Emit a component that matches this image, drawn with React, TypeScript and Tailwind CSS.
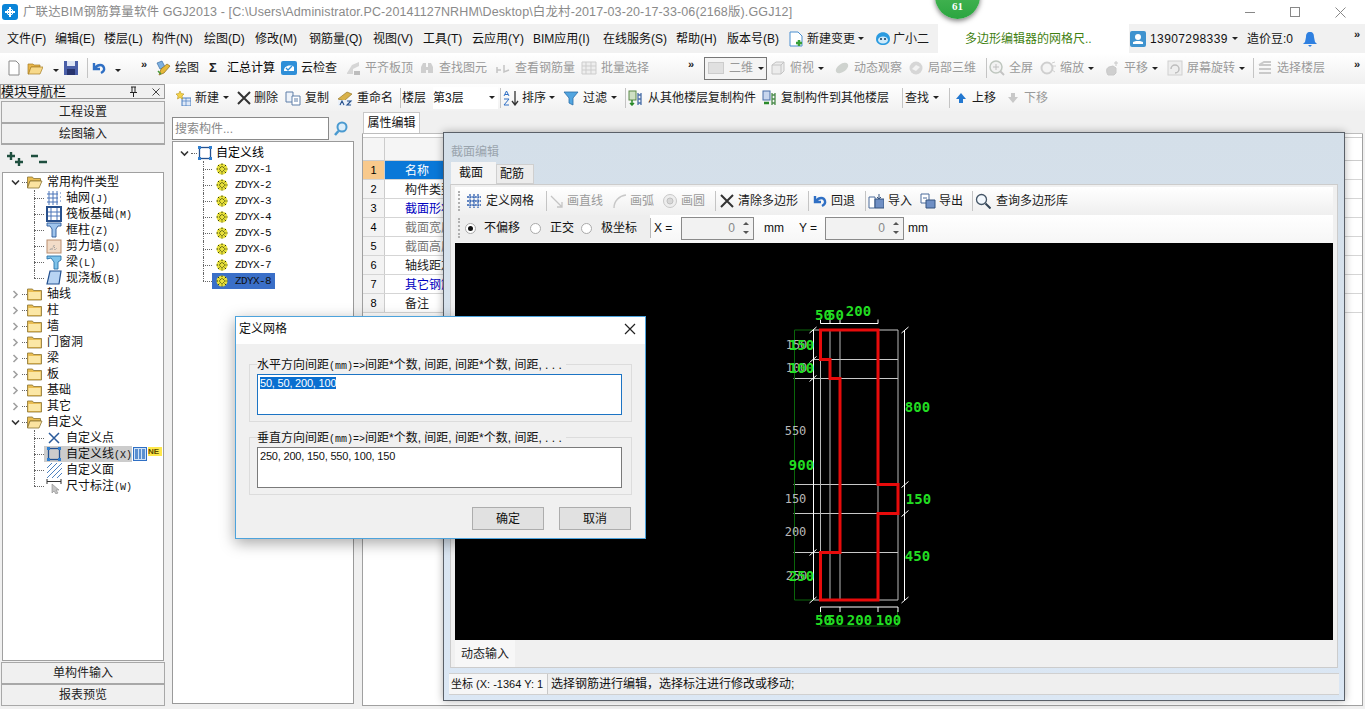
import { ReactNode } from 'react';

const sans = "font-['Liberation_Sans','Noto_Sans_CJK_SC',sans-serif]";
const mono = "font-['Liberation_Mono','Noto_Sans_CJK_SC',monospace]";

const Svg = ({ children, w = 16, h = 16 }: { children: ReactNode; w?: number; h?: number }) => (
  <svg width={w} height={h} viewBox={`0 0 ${w} ${h}`} className="shrink-0">
    {children}
  </svg>
);

const icons: Record<string, ReactNode> = {
  doc: <path d="M3 1h7l3 3v11H3z" fill="#fff" stroke="#8a8a8a" />,
  open: (
    <>
      <path d="M1 4h5l1 1h6v2H4L2 14H1z" fill="#e8b64a" stroke="#a67c24" strokeWidth=".7" />
      <path d="M4 7h12l-3 7H1.500z" fill="#f7d98a" stroke="#a67c24" strokeWidth=".7" />
    </>
  ),
  save: (
    <>
      <rect x="1" y="1" width="14" height="14" fill="#4a5fa8" />
      <rect x="4" y="1" width="8" height="5" fill="#dfe6f5" />
      <rect x="4" y="9" width="8" height="6" fill="#27346e" />
    </>
  ),
  undo: <path d="M3 3v6h6M4 8c3-4 8-4 9 0 .5 2-1 4-3 5" fill="none" stroke="#2f6fc4" strokeWidth="2.400" />,
  draw: (
    <>
      <path d="M2 3l5-2 3 6-5 2z" fill="#7fb1e0" stroke="#3a6ea5" strokeWidth=".7" />
      <path d="M6 9l6-5 3 2-6 7-5 2z" fill="#e7b93a" stroke="#8b6b1a" strokeWidth=".7" />
      <path d="M3 11l3 3" stroke="#4a9a3a" strokeWidth="1.500" />
    </>
  ),
  cloud: (
    <>
      <rect x="0" y="1" width="16" height="14" rx="2" fill="#2f8fd8" />
      <path d="M3 10c0-4 7-6 10-3v4H3z" fill="#fff" />
      <path d="M5 8l2 2 4-4" fill="none" stroke="#2f8fd8" strokeWidth="1.300" />
    </>
  ),
  align: (
    <>
      <path d="M2 13l5-8 7-3v4l-6 3v5H2z" fill="#d6d6d6" />
      <path d="M9 11h6v4H9z" fill="#bdbdbd" />
    </>
  ),
  binoc: <path d="M2 13V7l2-4h3v4h2V3h3l2 4v6H9v-3H7v3z" fill="#cfcfcf" />,
  rebar: <path d="M2 10h4M2 7v6M9 5v7l5-2" fill="none" stroke="#c4c4c4" strokeWidth="1.500" />,
  batch: <path d="M1 2h14v12H1zM1 6h14M1 10h14M5 2v12M10 2v12" fill="#eee" stroke="#cdcdcd" />,
  cube: <path d="M2 5l4-3h8v9l-3 3H2zM2 5h9v9M11 5l3-3" fill="#ececec" stroke="#c4c4c4" />,
  orbit: <ellipse cx="8" cy="8" rx="7" ry="4" fill="#cfd3cf" transform="rotate(-35 8 8)" />,
  part: (
    <>
      <circle cx="8" cy="8" r="6.500" fill="#d6d6d6" />
      <path d="M4 9l4-4 4 2-4 4z" fill="#f2f2f2" />
    </>
  ),
  zoomfull: (
    <>
      <circle cx="7" cy="7" r="6" fill="#f2f2f2" stroke="#bfc7bf" strokeWidth="1.500" />
      <path d="M7 4v6M4 7h6" stroke="#c0c0c0" />
      <path d="M11 11l4 4" stroke="#c4c4c4" strokeWidth="2" />
    </>
  ),
  zoomin: (
    <>
      <circle cx="7" cy="8" r="5.500" fill="#f4f4f4" stroke="#cfcfcf" strokeWidth="2" />
      <path d="M12 3l3-1M13 6h3M12 10l3 2" stroke="#d0d0d0" />
    </>
  ),
  pan: <path d="M4 15c-2-3-2-7 1-8l4-1 3 2v5l-2 2zM12 1v5M10 3h4" fill="#cfcfcf" stroke="#c8c8c8" />,
  rotate: (
    <>
      <rect x="1" y="1" width="14" height="14" fill="#eee" stroke="#d0d0d0" />
      <path d="M4 9a4 4 0 1 1 4 4" fill="none" stroke="#bdbdbd" strokeWidth="1.500" />
    </>
  ),
  floors: <path d="M2 5l5-3h7M2 5h12M2 9h12M2 13h12" fill="none" stroke="#cacaca" strokeWidth="2" />,
  add: (
    <>
      <rect x="7" y="8" width="9" height="8" fill="#dfe9f7" stroke="#4a7fc0" />
      <path d="M7 11h9M11 8v8" stroke="#4a7fc0" strokeWidth=".7" />
      <path d="M5 1l1.200 2.500L9 4 7 6 7.500 9 5 7.500 2.500 9 3 6 1 4l2.800-.5z" fill="#f4d24a" stroke="#b8961e" strokeWidth=".6" />
    </>
  ),
  x: <path d="M2 2l12 12M14 2L2 14" stroke="#333" strokeWidth="2" />,
  copy: (
    <>
      <path d="M1 2h7v10H1z" fill="#eef3fa" stroke="#5f7fa8" />
      <path d="M7 6h8v9H7z" fill="#fff" stroke="#5f7fa8" />
      <path d="M9 9h4M9 11h4" stroke="#5f7fa8" />
    </>
  ),
  rename: (
    <>
      <path d="M1 9l9-7 5 2-8 7z" fill="#d9b24a" stroke="#8b6b1a" strokeWidth=".6" />
      <rect x="1" y="10" width="14" height="6" fill="#eaf0f8" />
      <path d="M3 15l2-4 2 4M10 11h4l-4 4h4" fill="none" stroke="#26508c" strokeWidth="1.100" />
    </>
  ),
  sort: (
    <>
      <path d="M1 6l2.500-5L6 6M2 4.500h3M1 9h5l-5 6h5" fill="none" stroke="#2f6fc4" />
      <path d="M12 1v13M9 11l3 4 3-4" fill="none" stroke="#333" strokeWidth="1.300" />
    </>
  ),
  filter: <path d="M1 2h14l-5 6v7l-4-2V8z" fill="#52a5e0" stroke="#2c6ea8" strokeWidth=".8" />,
  from: (
    <>
      <rect x="1" y="1" width="7" height="9" fill="#cfe0c4" stroke="#5d8a4a" />
      <path d="M4 10v5M2 13l2 2 2-2" stroke="#2a8a2a" strokeWidth="1.500" fill="none" />
      <path d="M10 3v12M13 3v12M10 5h3M10 9h3M10 13h3" stroke="#4a6fa8" strokeWidth="1.300" />
    </>
  ),
  to: (
    <>
      <rect x="1" y="1" width="7" height="9" fill="#c8d6ee" stroke="#4a6fa8" />
      <path d="M2 13h5" stroke="#2a8a2a" strokeWidth="2.500" />
      <path d="M10 3v12M13 3v12M10 5h3M10 9h3M10 13h3" stroke="#4a8a4a" strokeWidth="1.300" />
    </>
  ),
  up: <path d="M8 3l5 6h-3v4H6V9H3z" fill="#2378d0" />,
  down: <path d="M8 13l5-6h-3V3H6v4H3z" fill="#c8c8c8" />,
  grid: <path d="M1 4h14M1 8h14M1 12h14M4 1v14M8 1v14M12 1v14" stroke="#2f5fb0" strokeWidth="1.300" strokeDasharray="2 .6" />,
  line: <path d="M2 3l11 11M13 9v5H8" fill="none" stroke="#c5c5c5" strokeWidth="1.300" />,
  arc: <path d="M2 15C2 8 7 3 14 2" fill="none" stroke="#c8c8c8" strokeWidth="1.500" />,
  circle: (
    <>
      <circle cx="8" cy="8" r="6.500" fill="#eee" stroke="#c8c8c8" />
      <circle cx="8" cy="8" r="3" fill="#d8d8d8" stroke="#c0c0c0" />
    </>
  ),
  import: (
    <>
      <path d="M1 4h6v11H1z" fill="#fff" stroke="#4a6a9a" />
      <path d="M7 6h9v9H7z" fill="#6f8fc4" stroke="#35537f" />
      <path d="M11 1v5M9 4l2 2 2-2" fill="none" stroke="#35537f" />
    </>
  ),
  export: (
    <>
      <path d="M1 1h8v9H1z" fill="#fff" stroke="#4a6a9a" />
      <path d="M6 7h9v8H6z" fill="#6f8fc4" stroke="#35537f" />
      <path d="M3 5h4" stroke="#4a6a9a" />
    </>
  ),
  find: (
    <>
      <circle cx="6.500" cy="6.500" r="5" fill="#f3f8fd" stroke="#456" strokeWidth="1.300" />
      <path d="M10.500 10.500l5 5" stroke="#345" strokeWidth="2" />
    </>
  ),
  change: (
    <>
      <path d="M2 1h8l4 4v10H2z" fill="#fff" stroke="#4a8fd0" />
      <path d="M11 9v6M8 12h6" stroke="#38a038" strokeWidth="2.500" />
    </>
  ),
  bot: (
    <>
      <path d="M1 8c0-9 14-9 14 0 0 8-14 8-14 0z" fill="#2b9be0" />
      <ellipse cx="8" cy="9" rx="5" ry="3.500" fill="#cfeaf9" />
      <circle cx="6" cy="8" r="1" fill="#135" />
      <circle cx="10" cy="8" r="1" fill="#135" />
    </>
  ),
  user: (
    <>
      <rect x="0" y="0" width="16" height="16" rx="2" fill="#3f93cf" />
      <circle cx="8" cy="6" r="3" fill="#fff" />
      <path d="M3 13h10v-2l-3-1H6l-3 1z" fill="#fff" />
    </>
  ),
  bell: <path d="M8 1c3 0 4 2 4 5l1 5 2 2H1l2-2 1-5c0-3 1-5 4-5zM6 14h4l-2 2z" fill="#2f80e0" />,
  gear: (
    <>
      <circle cx="6" cy="6" r="5.500" fill="#e8e03a" />
      <path d="M6 .5v11M.5 6h11M2 2l8 8M10 2l-8 8" stroke="#2f3a08" strokeDasharray="1.500 1" />
      <circle cx="6" cy="6" r="1.800" fill="#e8e03a" />
    </>
  ),
  folder: (
    <>
      <path d="M.5 3h5l1 1.500h8V14H.5z" fill="#e9bd52" stroke="#8a7432" strokeWidth=".8" />
      <rect x="1.500" y="6" width="12" height="7" fill="#fbe7a6" />
    </>
  ),
  folderopen: (
    <>
      <path d="M.5 3h5l1 1.500h7V7H3L.5 14z" fill="#e9bd52" stroke="#8a7432" strokeWidth=".8" />
      <path d="M3 7h12l-3 7H.5z" fill="#fbe3a0" stroke="#8a7432" strokeWidth=".8" />
    </>
  ),
  axis: <path d="M1 4h11M1 8h11M1 12h11M3 1v14M7 1v14M11 1v14M14 3h1M14 7h1M14 11h1" stroke="#4a74b8" />,
  raft: (
    <>
      <rect x="1" y="1" width="14" height="14" fill="#fff" stroke="#28508c" strokeWidth="2" />
      <path d="M5 2v12M11 2v12M2 6h12M2 10h12" stroke="#4a74b8" />
    </>
  ),
  column: <path d="M1 1h14v3h-3l-2 3v8H6V7L4 4H1z" fill="#9fc4ec" stroke="#2a5a9a" strokeWidth=".9" />,
  wall: (
    <>
      <rect x="1" y="2" width="14" height="13" fill="#f2dcc8" stroke="#b98d6e" />
      <path d="M4 12l1-2 1 2 2-5 1 5 2-2" stroke="#9a9a9a" fill="none" strokeDasharray="1 1" />
    </>
  ),
  beam: <path d="M1 2h14v4l-3 2v7H8V8L5 4 1 5z" fill="#7fc3ea" stroke="#2a74aa" strokeWidth=".9" />,
  slab: <path d="M4 1h11l-2 13H1z" fill="#b8d4f3" stroke="#23508f" strokeWidth="1.200" />,
  point: <path d="M3 3l10 10M13 3L3 13" stroke="#2a5a9a" strokeWidth="1.500" />,
  pline: (
    <>
      <rect x="2.500" y="2.500" width="11" height="11" fill="none" stroke="#23508f" strokeWidth="1.300" />
      <path d="M1 1h3v3H1zM12 1h3v3h-3zM1 12h3v3H1zM12 12h3v3h-3z" fill="#2f7fd0" />
    </>
  ),
  face: <path d="M1 6l5-5M1 11L11 1M1 16L16 1M6 16L16 6M11 16l5-5" stroke="#3a74b8" strokeWidth=".9" />,
  dim: (
    <>
      <path d="M1 1v5M15 1v5M1 3.500h14" stroke="#333" />
      <path d="M6 6v9l2-2 2 3 2-1-2-3h3z" fill="#c4c4c4" stroke="#888" strokeWidth=".6" />
    </>
  ),
};

const Icon = ({ name }: { name: string }) => <Svg>{icons[name]}</Svg>;

const Caret = () => <span className="inline-block border-x-[3px] border-t-[3px] border-x-transparent border-t-[#222] shrink-0" />;

const More = ({ cls }: { cls: string }) => (
  <span className={`${cls} -mt-2 text-[11px] font-bold leading-none text-[#222]`}>»</span>
);

const Sep = ({ cls }: { cls: string }) => (
  <span className={`${cls} flex justify-center`}>
    <span className="block w-px h-[20px] bg-[#c4c4c4]" />
  </span>
);

type ToolProps = { cls: string; icon?: string; label?: string; off?: boolean; caret?: boolean; gap?: string };

const Tool = ({ cls, icon, label, off, caret, gap = 'gap-[4px]' }: ToolProps) => (
  <span className={`${cls} flex items-center ${gap} whitespace-nowrap ${off ? 'text-[#9a9a9a]' : 'text-[#1a1a1a]'}`}>
    {icon && <Icon name={icon} />}
    {label && <span>{label}</span>}
    {caret && <Caret />}
  </span>
);

const menu = [
  ['文件(F)', 'w-[48px]'],
  ['编辑(E)', 'w-[49px]'],
  ['楼层(L)', 'w-[48px]'],
  ['构件(N)', 'w-[52px]'],
  ['绘图(D)', 'w-[51px]'],
  ['修改(M)', 'w-[54px]'],
  ['钢筋量(Q)', 'w-[64px]'],
  ['视图(V)', 'w-[50px]'],
  ['工具(T)', 'w-[49px]'],
  ['云应用(Y)', 'w-[61px]'],
  ['BIM应用(I)', 'w-[70px]'],
  ['在线服务(S)', 'w-[73px]'],
  ['帮助(H)', 'w-[51px]'],
  ['版本号(B)', 'w-[61px]'],
];

const toolbar: ToolProps[] = [
  { cls: 'w-[54px]', icon: 'draw', label: '绘图' },
  { cls: 'w-[72px]', label: '' },
  { cls: 'w-[64px]', icon: 'cloud', label: '云检查' },
  { cls: 'w-[74px]', icon: 'align', label: '平齐板顶', off: true },
  { cls: 'w-[76px]', icon: 'binoc', label: '查找图元', off: true },
  { cls: 'w-[86px]', icon: 'rebar', label: '查看钢筋量', off: true },
  { cls: 'w-[107px]', icon: 'batch', label: '批量选择', off: true },
];

const toolbarRight: ToolProps[] = [
  { cls: 'w-[64px]', icon: 'cube', label: '俯视', off: true, caret: true },
  { cls: 'w-[74px]', icon: 'orbit', label: '动态观察', off: true },
  { cls: 'w-[75px]', icon: 'part', label: '局部三维', off: true },
];

const toolbarView: ToolProps[] = [
  { cls: 'w-[51px]', icon: 'zoomfull', label: '全屏', off: true },
  { cls: 'w-[64px]', icon: 'zoomin', label: '缩放', off: true, caret: true },
  { cls: 'w-[63px]', icon: 'pan', label: '平移', off: true, caret: true },
  { cls: 'w-[82px]', icon: 'rotate', label: '屏幕旋转', off: true, caret: true },
];

const commonKids = [
  ['axis', '轴网', '(J)'],
  ['raft', '筏板基础', '(M)'],
  ['column', '框柱', '(Z)'],
  ['wall', '剪力墙', '(Q)'],
  ['beam', '梁', '(L)'],
  ['slab', '现浇板', '(B)'],
];

const TreeFolder = ({ label, open }: { label: string; open?: boolean }) => (
  <div className="flex items-center h-[16px]">
    <span className="w-[19px] pl-[8px] flex">
      <svg width="9" height="9" viewBox="0 0 9 9">
        <path d={open ? 'M1 2.500l3.500 3.500L8 2.500' : 'M2.500 1L6 4.500 2.500 8'} fill="none" stroke={open ? '#333' : '#a0a0a0'} strokeWidth="1.600" />
      </svg>
    </span>
    <span className="w-[5px] border-t border-dotted border-[#666]" />
    <Icon name={open ? 'folderopen' : 'folder'} />
    <span className="ml-[4px]">{label}</span>
  </div>
);

const TreeKid = ({ icon, label, tail, active, last }: { icon: string; label: string; tail?: string; active?: boolean; last?: boolean }) => (
  <div className="flex items-center h-[16px] ml-[31px] relative whitespace-nowrap">
    <span className={`absolute left-0 top-0 border-l border-dotted border-[#666] ${last ? 'h-[8px]' : 'h-[16px]'}`} />
    <span className="w-[10px] border-t border-dotted border-[#666]" />
    <span className={`flex items-center h-[16px] pl-[2px] ${active ? 'bg-[#cccccc]' : ''}`}>
      <Icon name={icon} />
      <span className="ml-[4px]">
        {label}
        {tail && <span className={`${mono} text-[10px]`}>{tail}</span>}
      </span>
    </span>
    {active && (
      <>
        <span className="ml-[1px] w-[14px] h-[14px] border border-[#2f6fc4] bg-[#cfe2f7] flex gap-px p-px shrink-0">
          <span className="flex-1 bg-[#5a8fd0]" />
          <span className="flex-1 bg-[#5a8fd0]" />
          <span className="flex-1 bg-[#5a8fd0]" />
        </span>
        <span className={`${sans} ml-[1px] h-[9px] w-[14px] overflow-hidden -mt-[5px] bg-[#ffe84a] text-[8px] font-bold leading-[9px] text-[#5a4a00]`}>NE</span>
      </>
    )}
  </div>
);

const NavButton = ({ label, cls = '' }: { label: string; cls?: string }) => (
  <div className={`h-[22px] flex items-center justify-center bg-[#f0f0f0] border border-[#a8a8a8] text-[#222] ${cls}`}>{label}</div>
);

const LeftPanel = () => (
  <div className="w-[165px] h-[622px] mt-[1px] flex flex-col shrink-0">
    <div className="h-[15px] flex items-center border border-[#9a9a9a] bg-[#f0f0f0] text-[13px] leading-none text-[#111]">
      <span className="flex-1 whitespace-nowrap">模块导航栏</span>
      <svg width="9" height="11" viewBox="0 0 9 11" className="mr-[14px]">
        <path d="M2 1h5M3 1v5M6 1v5M1 6.500h7M4.500 7v4" stroke="#222" />
      </svg>
      <svg width="8" height="8" viewBox="0 0 8 8" className="mr-[4px]">
        <path d="M.5.500l7 7M7.500.500l-7 7" stroke="#444" />
      </svg>
    </div>
    <div className="mt-[2px] pl-px">
      <NavButton label="工程设置" />
      <NavButton label="绘图输入" cls="border-b-2" />
    </div>
    <div className="h-[27px] flex items-center pl-[6px] gap-[6px] bg-[#f0f0f0]">
      <svg width="18" height="16" viewBox="0 0 18 16">
        <path d="M5 1v8M1 5h8M13 7v8M9 11h8" stroke="#1f4f3f" strokeWidth="2.400" />
      </svg>
      <svg width="17" height="12" viewBox="0 0 17 12">
        <path d="M1 3h7M9 9h8" stroke="#1f4f3f" strokeWidth="2.400" />
      </svg>
    </div>
    <div className="flex-1 ml-[2px] mr-px bg-white border border-[#a0a0a0] pt-[1px] text-[12px] text-[#111] leading-none overflow-hidden">
      <TreeFolder label="常用构件类型" open />
      {commonKids.map((k, i) => (
        <TreeKid key={k[1]} icon={k[0]} label={k[1]} tail={k[2]} last={i === 5} />
      ))}
      {['轴线', '柱', '墙', '门窗洞', '梁', '板', '基础', '其它'].map((f) => (
        <TreeFolder key={f} label={f} />
      ))}
      <TreeFolder label="自定义" open />
      <TreeKid icon="point" label="自定义点" />
      <TreeKid icon="pline" label="自定义线" tail="(X)" active />
      <TreeKid icon="face" label="自定义面" />
      <TreeKid icon="dim" label="尺寸标注" tail="(W)" last />
    </div>
    <div className="pl-px mt-px">
      <NavButton label="单构件输入" />
      <NavButton label="报表预览" />
    </div>
  </div>
);

const zdyx = [1, 2, 3, 4, 5, 6, 7, 8];

const ComponentList = () => (
  <div className="w-[182px] ml-[7px] flex flex-col shrink-0">
    <div className="h-[30px] pt-[6px] flex items-start">
      <div className="w-[157px] h-[23px] border border-[#8a8a8a] bg-white flex items-center pl-[2px] text-[#888]">搜索构件...</div>
      <svg width="16" height="16" viewBox="0 0 16 16" className="ml-[4px] mt-[4px]">
        <circle cx="9" cy="6" r="4.500" fill="#dceefa" stroke="#4a9ad0" strokeWidth="2" />
        <path d="M5.500 10L2 14" stroke="#4a9ad0" strokeWidth="2.500" />
      </svg>
    </div>
    <div className="h-[563px] border border-[#9a9a9a] bg-white pt-[3px] leading-none">
      <div className="flex items-center h-[16px] pl-[7px]">
        <svg width="9" height="9" viewBox="0 0 9 9">
          <path d="M1 2.500l3.500 3.500L8 2.500" fill="none" stroke="#333" strokeWidth="1.600" />
        </svg>
        <span className="w-[6px] ml-[2px] border-t border-dotted border-[#666]" />
        <Icon name="pline" />
        <span className="ml-[3px]">自定义线</span>
      </div>
      {zdyx.map((n) => (
        <div key={n} className="flex items-center h-[16px] ml-[30px] relative">
          <span className={`absolute left-0 top-0 border-l border-dotted border-[#666] ${n === 8 ? 'h-[8px]' : 'h-[16px]'}`} />
          <span className="w-[9px] border-t border-dotted border-[#666]" />
          <span className={`flex items-center h-[16px] pl-[4px] ${n === 8 ? 'w-[63px] bg-[#3a6fc8]' : ''}`}>
            <Svg w={12} h={12}>{icons.gear}</Svg>
            <span className={`${mono} ml-[7px] text-[11px] tracking-[-0.6px] text-[#111]`}>ZDYX-{n}</span>
          </span>
        </div>
      ))}
    </div>
  </div>
);

const props = [
  ['名称', 'text-white'],
  ['构件类型', 'text-[#222]'],
  ['截面形状', 'text-[#0000c0]'],
  ['截面宽度(mm)', 'text-[#777]'],
  ['截面高度(mm)', 'text-[#777]'],
  ['轴线距左边线距离', 'text-[#222]'],
  ['其它钢筋', 'text-[#0000c0]'],
  ['备注', 'text-[#222]'],
];

const PropertyPanel = () => (
  <div className="flex-1 ml-[8px] mr-[2px] flex flex-col">
    <div className="h-[21px] mt-[2px] flex items-end border-b border-[#bdbdbd]">
      <span className="w-[57px] h-[21px] ml-[1px] flex items-center justify-center bg-white border border-b-0 border-[#c8c8c8] text-[#111]">属性编辑</span>
    </div>
    <div className="h-[572px] bg-white border-x border-b border-[#a0a0a0] pt-[3px]">
      <div className="h-[24px] flex border-y border-[#ccc]">
        <span className="w-[22px] border-r border-[#ccc] bg-[#f5f5f5]" />
        <span className="w-[300px] bg-[#f5f5f5]" />
      </div>
      {props.map((p, i) => (
        <div key={p[0]} className="h-[19px] flex border-b border-[#d5d5d5]">
          <span className={`w-[22px] pt-px flex items-center justify-center border-r border-[#ccc] text-[11px] ${i === 0 ? 'bg-[#f8c98c]' : 'bg-[#f3f3f3]'}`}>{i + 1}</span>
          <span className={`w-[300px] pl-[20px] pt-px flex items-center ${p[1]} ${i === 0 ? 'bg-[#0a78d8]' : ''}`}>{p[0]}</span>
        </div>
      ))}
    </div>
  </div>
);

const Grip = ({ cls = 'ml-[3px] mr-[6px]' }: { cls?: string }) => <span className={`w-[2px] h-[20px] ${cls} border-l-2 border-dotted border-[#b0b0b0] shrink-0`} />;

const Radio = ({ on }: { on?: boolean }) => (
  <span className="w-[11px] h-[11px] rounded-full border border-[#aaa] bg-white flex items-center justify-center shrink-0">
    {on && <span className="w-[5px] h-[5px] rounded-full bg-[#111]" />}
  </span>
);

const Spin = ({ cls }: { cls: string }) => (
  <span className={`${cls} h-[23px] flex items-center justify-end border border-[#8a8a8a] bg-[#f2f2f2] text-[#888]`}>
    0
    <span className="w-[10px] ml-[6px] mr-[2px] flex flex-col items-center gap-[6px]">
      <span className="border-x-[3px] border-b-[3px] border-x-transparent border-b-[#555]" />
      <span className="border-x-[3px] border-t-[3px] border-x-transparent border-t-[#555]" />
    </span>
  </span>
);

const hLines = [330, 359.5, 378.5, 484.5, 513.5, 552.5, 600];
const vLines = [820, 829.5, 839.5, 877.5, 897.5];

const dimGreen: [string, number, number][] = [
  ['50', 823, 320],
  ['50', 835, 320],
  ['200', 858, 316],
  ['150', 801, 350],
  ['100', 801, 373],
  ['900', 801, 470],
  ['250', 801, 581],
  ['800', 917, 412],
  ['150', 918, 504],
  ['450', 917, 561],
  ['50', 823, 625],
  ['50', 835, 625],
  ['200', 859, 625],
  ['100', 888, 625],
];

const dimGray: [string, number, number][] = [
  ['150', 796, 350],
  ['100', 796, 373],
  ['550', 795, 436],
  ['150', 795, 504],
  ['200', 795, 537],
  ['250', 796, 581],
];

// canvas origin is 455,243 so the drawing keeps screen coordinates through viewBox
const Drawing = () => (
  <svg viewBox="455 243 877 397" className="w-full h-full block">
    {hLines.map((y) => (
      <line key={y} x1={y === 330 || y === 359.5 || y === 600 ? 813 : 793} x2="897.500" y1={y} y2={y} stroke="#c8c8c8" />
    ))}
    {vLines.map((x) => (
      <line key={x} x1={x} x2={x} y1="330" y2="600" stroke="#b8b8b8" />
    ))}
    <path d="M794 330v270M794 330h20M794 600h20M820 626h77M820 610v16M897 610v16" fill="none" stroke="#0a660a" />
    <path d="M813 330v270M904 330v270M820 323.500h57.500M820 607h77.500M829.500 323.500v-4M839.500 323.500v-4M820 323.500v-4M877.500 323.500v-4M820 607v5M839.500 607v5M877.500 607v5M897.500 607v5" fill="none" stroke="#fff" />
    {[330, 359.5, 378.5, 552.5, 600].map((y) => (
      <path key={y} d={`M809 ${y + 3}l7-6`} stroke="#fff" />
    ))}
    {[330, 484.5, 513.5, 600].map((y) => (
      <path key={y} d={`M901 ${y + 3}l7-6`} stroke="#fff" />
    ))}
    {dimGray.map(([t, x, y]) => (
      <text key={`${t}${y}`} x={x} y={y - 1} textAnchor="middle" fontSize="12" fill="#b8b8b8" fontFamily="DejaVu Sans Mono, monospace">
        {t}
      </text>
    ))}
    {dimGreen.map(([t, x, y]) => (
      <text key={`${t}${x}${y}`} x={x} y={y} textAnchor="middle" fontSize="14" fontWeight="700" fill="#22dd22" fontFamily="DejaVu Sans Mono, monospace">
        {t}
      </text>
    ))}
    <path d="M820 330H877.500V484.500H897.500V513.500H877.500V600H820V552.500H839.500V378.500H829.500V359.500H820Z" fill="none" stroke="#e80b0b" strokeWidth="3" />
  </svg>
);

const SectionWindow = () => (
  <div className="absolute left-[443px] top-[132px] w-[902px] h-[569px] bg-gradient-to-b from-[#d4dfe9] to-[#dbe7f4] border border-[#5a6068] shadow-[0_0_8px_rgba(0,0,0,0.3)] flex flex-col">
    <div className="h-[30px] pl-[7px] pt-[10px] text-[#9aa4ad] leading-[18px]">截面编辑</div>
    <div className="flex h-[22px] pl-[7px] items-end">
      <span className="w-[45px] h-[22px] pl-[8px] pt-px flex items-center bg-[#f4f4f4] text-[#111]">截面</span>
      <span className="w-[38px] h-[20px] pl-[3px] pt-px flex items-center bg-[#ececec] border border-[#cfcfcf] text-[#111]">配筋</span>
    </div>
    <div className="mx-[6px] flex-1 bg-[#f0f0f0] border border-[#ccc] pt-[2px] px-[4px] flex flex-col">
      <div className="h-[28px] flex items-center bg-gradient-to-b from-white to-[#efefef]">
        <Grip />
        <Tool cls="w-[78px]" icon="grid" label="定义网格" />
        <Sep cls="w-[5px]" />
        <Tool cls="w-[63px]" icon="line" label="画直线" off gap="gap-[2px]" />
        <Tool cls="w-[50px]" icon="arc" label="画弧" off gap="gap-[2px]" />
        <Tool cls="w-[50px]" icon="circle" label="画圆" off gap="gap-[3px]" />
        <Sep cls="w-[7px]" />
        <Tool cls="w-[86px]" icon="x" label="清除多边形" gap="gap-[3px]" />
        <Sep cls="w-[7px]" />
        <Tool cls="w-[50px]" icon="undo" label="回退" gap="gap-[3px]" />
        <Sep cls="w-[6px]" />
        <Tool cls="w-[52px]" icon="import" label="导入" gap="gap-[4px]" />
        <Tool cls="w-[50px]" icon="export" label="导出" gap="gap-[3px]" />
        <Sep cls="w-[5px]" />
        <Tool cls="w-[100px]" icon="find" label="查询多边形库" gap="gap-[5px]" />
      </div>
      <div className="h-[28px] pb-px flex items-center bg-gradient-to-b from-white to-[#f6f6f6] text-[#111]">
        <span className="h-[27px] w-[195px] flex items-center bg-[#eeeeee]">
          <Grip cls="ml-[3px] mr-[5px]" />
          <Radio on />
          <span className="ml-[8px] w-[46px]">不偏移</span>
          <Radio />
          <span className="ml-[9px] w-[31px]">正交</span>
          <Radio />
          <span className="ml-[9px]">极坐标</span>
        </span>
        <span className="w-px h-[20px] bg-[#b8b8b8]" />
        <span className={`${sans} ml-[3px] w-[27px]`}>X =</span>
        <Spin cls="w-[73px]" />
        <span className={`${sans} ml-[10px] w-[35px]`}>mm</span>
        <span className={`${sans} w-[26px]`}>Y =</span>
        <Spin cls="w-[79px]" />
        <span className={`${sans} ml-[4px]`}>mm</span>
      </div>
      <div className="h-[397px] bg-black overflow-hidden">
        <Drawing />
      </div>
      <div className="h-[27px] flex">
        <span className="w-[60px] pt-[2px] flex items-center justify-center bg-[#f7f7f7] text-[#222]">动态输入</span>
      </div>
    </div>
    <div className="h-[24px] mt-[5px] mx-[5px] flex items-center bg-[#efefef] border-y border-[#d0d0d0] text-[11px] text-[#111] overflow-hidden">
      <span className="w-[99px] h-[20px] pl-[2px] flex items-center border-r border-[#c8c8c8] bg-[#f6f6f6] whitespace-nowrap">坐标 (X: -1364 Y: 1</span>
      <span className="pl-[3px] text-[12px]">选择钢筋进行编辑，选择标注进行修改或移动;</span>
    </div>
    <div className="h-[5px]" />
  </div>
);

const GridGroup = ({ title, value, active }: { title: string; value: string; active?: boolean }) => (
  <div className="relative h-[58px] border border-[#dcdcdc] pt-[9px] px-[7px]">
    <span className={`${sans} absolute left-[7px] -top-[9px] bg-[#f0f0f0] pr-[4px] whitespace-nowrap text-[#111]`}>
      {title}
      <span className={`${mono} text-[10px]`}>(mm)=&gt;</span>
      间距*个数, 间距, 间距*个数, 间距, . . .
    </span>
    <div className={`h-[41px] w-[365px] bg-white border text-[11px] tracking-[-0.2px] ${sans} pl-[2px] pt-px leading-[14px] ${active ? 'border-[#1c74c4]' : 'border-[#7a7a7a]'} text-[#111]`}>
      {active ? <span className="bg-[#0a6fd0] text-white">{value}</span> : value}
    </div>
  </div>
);

const GridDialog = () => (
  <div className="absolute left-[235px] top-[316px] w-[411px] h-[223px] bg-[#f0f0f0] border border-[#4da3dc] shadow-[0_4px_14px_rgba(0,0,0,0.35)] flex flex-col">
    <div className="h-[27px] pb-[3px] flex items-center justify-between bg-white pl-[3px] pr-[9px] text-[#111]">
      <span>定义网格</span>
      <svg width="12" height="12" viewBox="0 0 12 12">
        <path d="M1 1l10 10M11 1L1 11" stroke="#222" strokeWidth="1.200" />
      </svg>
    </div>
    <div className="flex-1 px-[13px] pt-[20px] flex flex-col gap-[15px]">
      <GridGroup title="水平方向间距" value="50, 50, 200, 100" active />
      <GridGroup title="垂直方向间距" value="250, 200, 150, 550, 100, 150" />
      <div className="mt-[-3px] flex justify-end gap-[15px]">
        <span className="w-[72px] h-[23px] flex items-center justify-center bg-[#e1e1e1] border border-[#adadad] text-[#111]">确定</span>
        <span className="w-[72px] h-[23px] mr-px flex items-center justify-center bg-[#e1e1e1] border border-[#adadad] text-[#111]">取消</span>
      </div>
    </div>
  </div>
);

const App = () => (
  <div className={`relative w-[1365px] h-[709px] overflow-hidden bg-[#f0f0f0] text-[12px] ${sans}`}>
    <div className="h-[24px] flex items-center bg-white pl-[2px] text-[#8a8a8a]">
      <span className="w-[16px] h-[16px] rounded-[3px] bg-[#0a84d8] flex items-center justify-center">
        <svg width="12" height="12" viewBox="0 0 12 12">
          <path d="M6 1v10M1 6h10" stroke="#fff" strokeWidth="2" />
          <circle cx="6" cy="6" r="3" fill="none" stroke="#fff" />
        </svg>
      </span>
      <span className="ml-[5px] whitespace-nowrap text-[12.500px] tracking-[0.12px]">
        广联达BIM钢筋算量软件 GGJ2013 - [C:\Users\Administrator.PC-20141127NRHM\Desktop\白龙村-2017-03-20-17-33-06(2168版).GGJ12]
      </span>
      <span className="ml-auto flex items-center text-[#777]">
        <span className="w-[10px] h-px bg-[#888] mr-[35px]" />
        <span className="w-[10px] h-[10px] border border-[#888] mr-[35px]" />
        <svg width="11" height="11" viewBox="0 0 11 11" className="mr-[19px]">
          <path d="M.5.500l10 10M10.500.500l-10 10" stroke="#888" />
        </svg>
      </span>
    </div>

    <div className="h-[29px] flex items-center bg-[#f1f1f1] pl-[7px] text-[#111] whitespace-nowrap">
      {menu.map((m) => (
        <span key={m[0]} className={m[1]}>
          {m[0]}
        </span>
      ))}
      <Tool cls="w-[87px]" icon="change" label="新建变更" caret gap="gap-[3px]" />
      <Tool cls="w-[63px]" icon="bot" label="广小二" gap="gap-[2px]" />
      <span className="h-[29px] w-[191px] pl-[27px] flex items-center bg-white text-[#3f7f10]">多边形编辑器的网格尺..</span>
      <span className="w-[118px] pl-[1px] flex items-center gap-[4px]">
        <Icon name="user" />
        <span className="tracking-[0.4px]">13907298339</span>
        <Caret />
      </span>
      <span className="w-[55px]">造价豆:0</span>
      <Icon name="bell" />
      <More cls="ml-[36px]" />
    </div>

    <div className="h-[30px] flex items-center bg-gradient-to-b from-white to-[#f0f0f0] pl-[6px] whitespace-nowrap">
      <span className="w-[21px]"><Icon name="doc" /></span>
      <span className="w-[26px]"><Icon name="open" /></span>
      <span className="w-[10px]"><Caret /></span>
      <span className="w-[21px]"><Icon name="save" /></span>
      <Sep cls="w-[7px]" />
      <span className="w-[24px]"><Icon name="undo" /></span>
      <span className="w-[26px]"><Caret /></span>
      <More cls="w-[14px]" />
      {toolbar.map((t, i) =>
        i === 1 ? (
          <span key="sum" className="w-[72px] flex items-center">
            <span className="w-[18px] font-bold text-[13px] text-[#222]">Σ</span>
            <span>汇总计算</span>
          </span>
        ) : (
          <Tool key={t.label} {...t} />
        ),
      )}
      <More cls="w-[16px]" />
      <span className="w-[63px] h-[23px] mr-[3px] flex items-center border border-[#777] bg-[#f4f4f4] text-[#999] pl-[3px] gap-[5px]">
        <span className="w-[16px] h-[12px] bg-[#e0e0e0] border border-[#ccc]" />
        二维
        <Caret />
      </span>
      {toolbarRight.map((t) => (
        <Tool key={t.label} {...t} />
      ))}
      <Sep cls="w-[6px]" />
      {toolbarView.map((t) => (
        <Tool key={t.label} {...t} />
      ))}
      <Sep cls="w-[8px]" />
      <Tool cls="w-[97px]" icon="floors" label="选择楼层" off />
      <More cls="" />
    </div>

    <div className="flex items-start">
      <LeftPanel />
      <div className="flex-1 flex flex-col">
        <div className="h-[27px] mt-px flex items-center pl-[10px] bg-gradient-to-b from-white to-[#f1f1f1] whitespace-nowrap text-[#111]">
          <Tool cls="w-[61px]" icon="add" label="新建" caret />
          <Tool cls="w-[49px]" icon="x" label="删除" gap="gap-[2px]" />
          <Tool cls="w-[52px]" icon="copy" label="复制" />
          <Tool cls="w-[62px]" icon="rename" label="重命名" />
          <Sep cls="w-[3px]" />
          <span className="w-[31px]">楼层</span>
          <span className="w-[65px] h-[22px] pr-[3px] flex items-center justify-between bg-white">
            第3层
            <Caret />
          </span>
          <Sep cls="w-[5px]" />
          <Tool cls="w-[60px]" icon="sort" label="排序" caret gap="gap-[3px]" />
          <Tool cls="w-[59px]" icon="filter" label="过滤" caret />
          <Sep cls="w-[6px]" />
          <Tool cls="w-[134px]" icon="from" label="从其他楼层复制构件" />
          <Tool cls="w-[137px]" icon="to" label="复制构件到其他楼层" gap="gap-[3px]" />
          <Sep cls="w-[6px]" />
          <Tool cls="w-[41px]" label="查找" caret />
          <Sep cls="w-[7px]" />
          <Tool cls="w-[52px]" icon="up" label="上移" gap="gap-[3px]" />
          <Tool cls="w-[60px]" icon="down" label="下移" off gap="gap-[3px]" />
        </div>
        <div className="flex">
          <ComponentList />
          <PropertyPanel />
        </div>
      </div>
    </div>

    <SectionWindow />
    <GridDialog />

    <div className="absolute left-[935px] -top-[26px] w-[45px] h-[45px] rounded-full bg-gradient-to-b from-[#55c060] to-[#2aa540] shadow-[0_2px_5px_rgba(0,0,0,0.5)] flex items-end justify-center pb-[5px] font-['Liberation_Serif',serif] text-[11px] font-bold text-white">
      61
    </div>
  </div>
);

export default App;
